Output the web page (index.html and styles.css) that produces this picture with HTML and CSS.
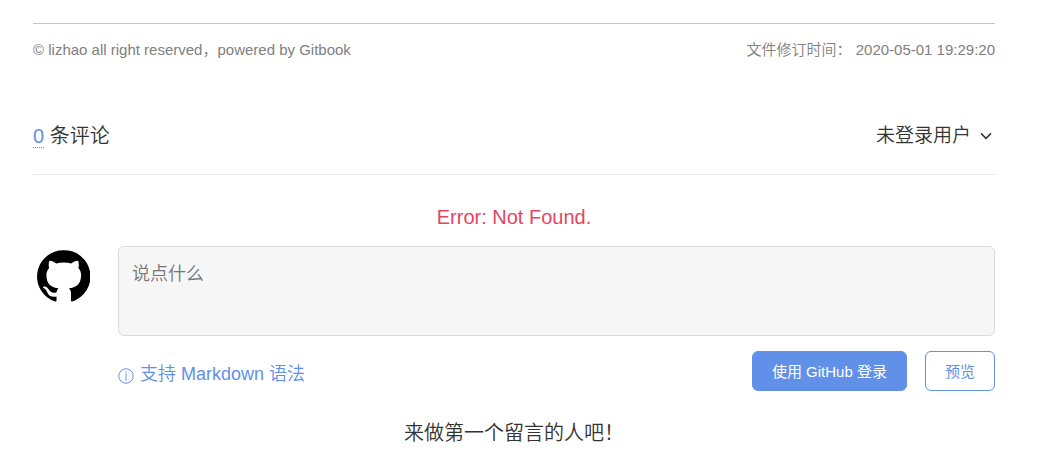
FILE: index.html
```
<!DOCTYPE html>
<html lang="zh-CN">

<head>
    <meta charset="UTF-8">
    <meta name="viewport" content="width=device-width, initial-scale=1.0">
    <title>Gitbook</title>
    <link rel="stylesheet" href="styles.css">
</head>

<body>
    <!-- 页脚 -->
    <footer class="page-footer">
        <span class="copyright">© lizhao all right reserved，powered by Gitbook</span>
        <span class="footer-modification">文件修订时间： 2020-05-01 19:29:20</span>
    </footer>

    <!-- 评论区 -->
    <section class="gt-container">
        <div class="gt-meta">
            <span class="gt-counts"><a class="gt-link gt-link-counts" href="#">0</a> 条评论</span>
            <button class="gt-user" type="button">
                <span>未登录用户</span>
                <svg class="gt-ico-arrow" viewBox="0 0 12 8">
                    <path d="M1 1.4L6 6.4L11 1.4"></path>
                </svg>
            </button>
        </div>

        <div class="gt-error">Error: Not Found.</div>

        <div class="gt-header">
            <a class="gt-avatar" href="#" aria-label="GitHub">
                <svg viewBox="0 0 53 53">
                    <path d="M26.5 0.2A26.3 26.3 0 0 0 18.2 51.5C19.2 51.7 19.5 51.2 19.5 50.3V46.4C15.5 47.2 12.2 46.4 10.7 43.2C9.6 40.6 8.8 39.3 6.6 38C5.6 37.2 6 36.5 7.4 36.6C9.5 36.8 10.8 38 11.9 39.8C13.8 42.9 16.6 43.3 19.6 42.2C19.8 40.5 20.5 39.2 21.6 38.3C14.6 37.4 9.4 34.3 9.4 24.9C9.4 22 10.4 19.8 12.2 17.9C11.8 16.8 11.2 14 12.4 10.8C14.3 10.5 17 11.8 19.4 13.5C24 12.3 29.5 12.3 34.1 13.5C36.5 11.8 39.2 10.5 41.1 10.8C42.3 14 41.7 16.8 41.3 17.9C43.1 19.8 44.1 22 44.1 24.9C44.1 34.3 38.8 37.4 31.9 38.3C33.3 39.5 34 41.1 34 43.5V50.3C34 51.2 34.3 51.7 35.3 51.5A26.3 26.3 0 0 0 26.5 0.2Z"></path>
                </svg>
            </a>
            <div class="gt-comment">
                <textarea class="gt-textarea" placeholder="说点什么" aria-label="说点什么"></textarea>
                <div class="gt-controls">
                    <a class="gt-link gt-tip" href="#">
                        <svg class="gt-ico-tip" viewBox="0 0 16 16">
                            <circle cx="8" cy="8" r="7.2"></circle>
                            <path d="M8 3.4v1.2M8 5.4v7.2"></path>
                        </svg>
                        <span>支持 Markdown 语法</span>
                    </a>
                    <div class="gt-btns">
                        <button class="gt-btn gt-btn-login" type="button">使用 GitHub 登录</button>
                        <button class="gt-btn gt-btn-preview" type="button">预览</button>
                    </div>
                </div>
            </div>
        </div>

        <div class="gt-no-comment">来做第一个留言的人吧！</div>
    </section>
</body>

</html>
```

FILE: styles.css
```
* {
    box-sizing: border-box;
}

body {
    margin: 0;
    padding: 23px 48px 16px 33px;
    font-family: "Liberation Sans", "Noto Sans CJK SC", sans-serif;
    font-size: 20px;
    font-weight: 350;
    line-height: 30px;
    color: #333;
    background: #fff;
}

/* 页脚 */
.page-footer {
    display: flex;
    justify-content: space-between;
    padding-top: 12px;
    border-top: 1px solid #c4c4c4;
    font-size: 15px;
    line-height: 28px;
    color: #808080;
}

.footer-modification {
    white-space: pre;
}

/* 评论头部 */
.gt-meta {
    display: flex;
    justify-content: space-between;
    align-items: center;
    margin-top: 57px;
    padding-bottom: 23px;
    border-bottom: 1px solid #e9e9e9;
}

.gt-link {
    color: #6190e8;
    text-decoration: none;
}

.gt-link-counts {
    border-bottom: 1px dotted #6190e8;
}

.gt-user {
    display: flex;
    align-items: center;
    gap: 9px;
    padding: 0 3px 0 0;
    border: none;
    background: none;
    font-family: inherit;
    font-size: 19px;
    font-weight: inherit;
    line-height: 30px;
    color: #333;
    cursor: pointer;
}

.gt-ico-arrow {
    width: 12px;
    height: 8px;
    fill: none;
    stroke: #333;
    stroke-width: 1.5;
}

.gt-error {
    margin: 27px 0 14px;
    text-align: center;
    color: #e64560;
}

/* 评论输入框 */
.gt-header {
    display: flex;
    gap: 28px;
}

.gt-avatar {
    flex: none;
    width: 57px;
    padding: 4px 0 0 4px;
}

.gt-avatar svg {
    display: block;
    width: 53px;
    height: 53px;
}

.gt-comment {
    flex: 1;
}

.gt-textarea {
    display: block;
    width: 100%;
    height: 90px;
    padding: 14px 13px;
    border: 1px solid #dbdbdb;
    border-radius: 6px;
    background: #f6f6f6;
    font-family: inherit;
    font-size: 18px;
    font-weight: inherit;
    line-height: 27px;
    resize: none;
}

.gt-textarea::placeholder {
    color: #757575;
}

.gt-controls {
    display: flex;
    justify-content: space-between;
    align-items: center;
    margin-top: 15px;
}

.gt-tip {
    display: flex;
    align-items: center;
    gap: 6px;
    padding-top: 6px;
    font-size: 18px;
}

.gt-ico-tip {
    width: 16px;
    height: 16px;
    margin-top: 4px;
    fill: none;
    stroke: #6190e8;
    stroke-width: 1;
}

.gt-btns {
    display: flex;
    gap: 18px;
}

.gt-btn {
    height: 40px;
    padding: 0 19px 2px;
    border: 1px solid #6190e8;
    border-radius: 6px;
    font-family: inherit;
    font-size: 15px;
    cursor: pointer;
}

.gt-btn-login {
    background: #6190e8;
    color: #fff;
}

.gt-btn-preview {
    background: #fff;
    color: #6190e8;
}

.gt-no-comment {
    margin-top: 27px;
    text-align: center;
}
```
